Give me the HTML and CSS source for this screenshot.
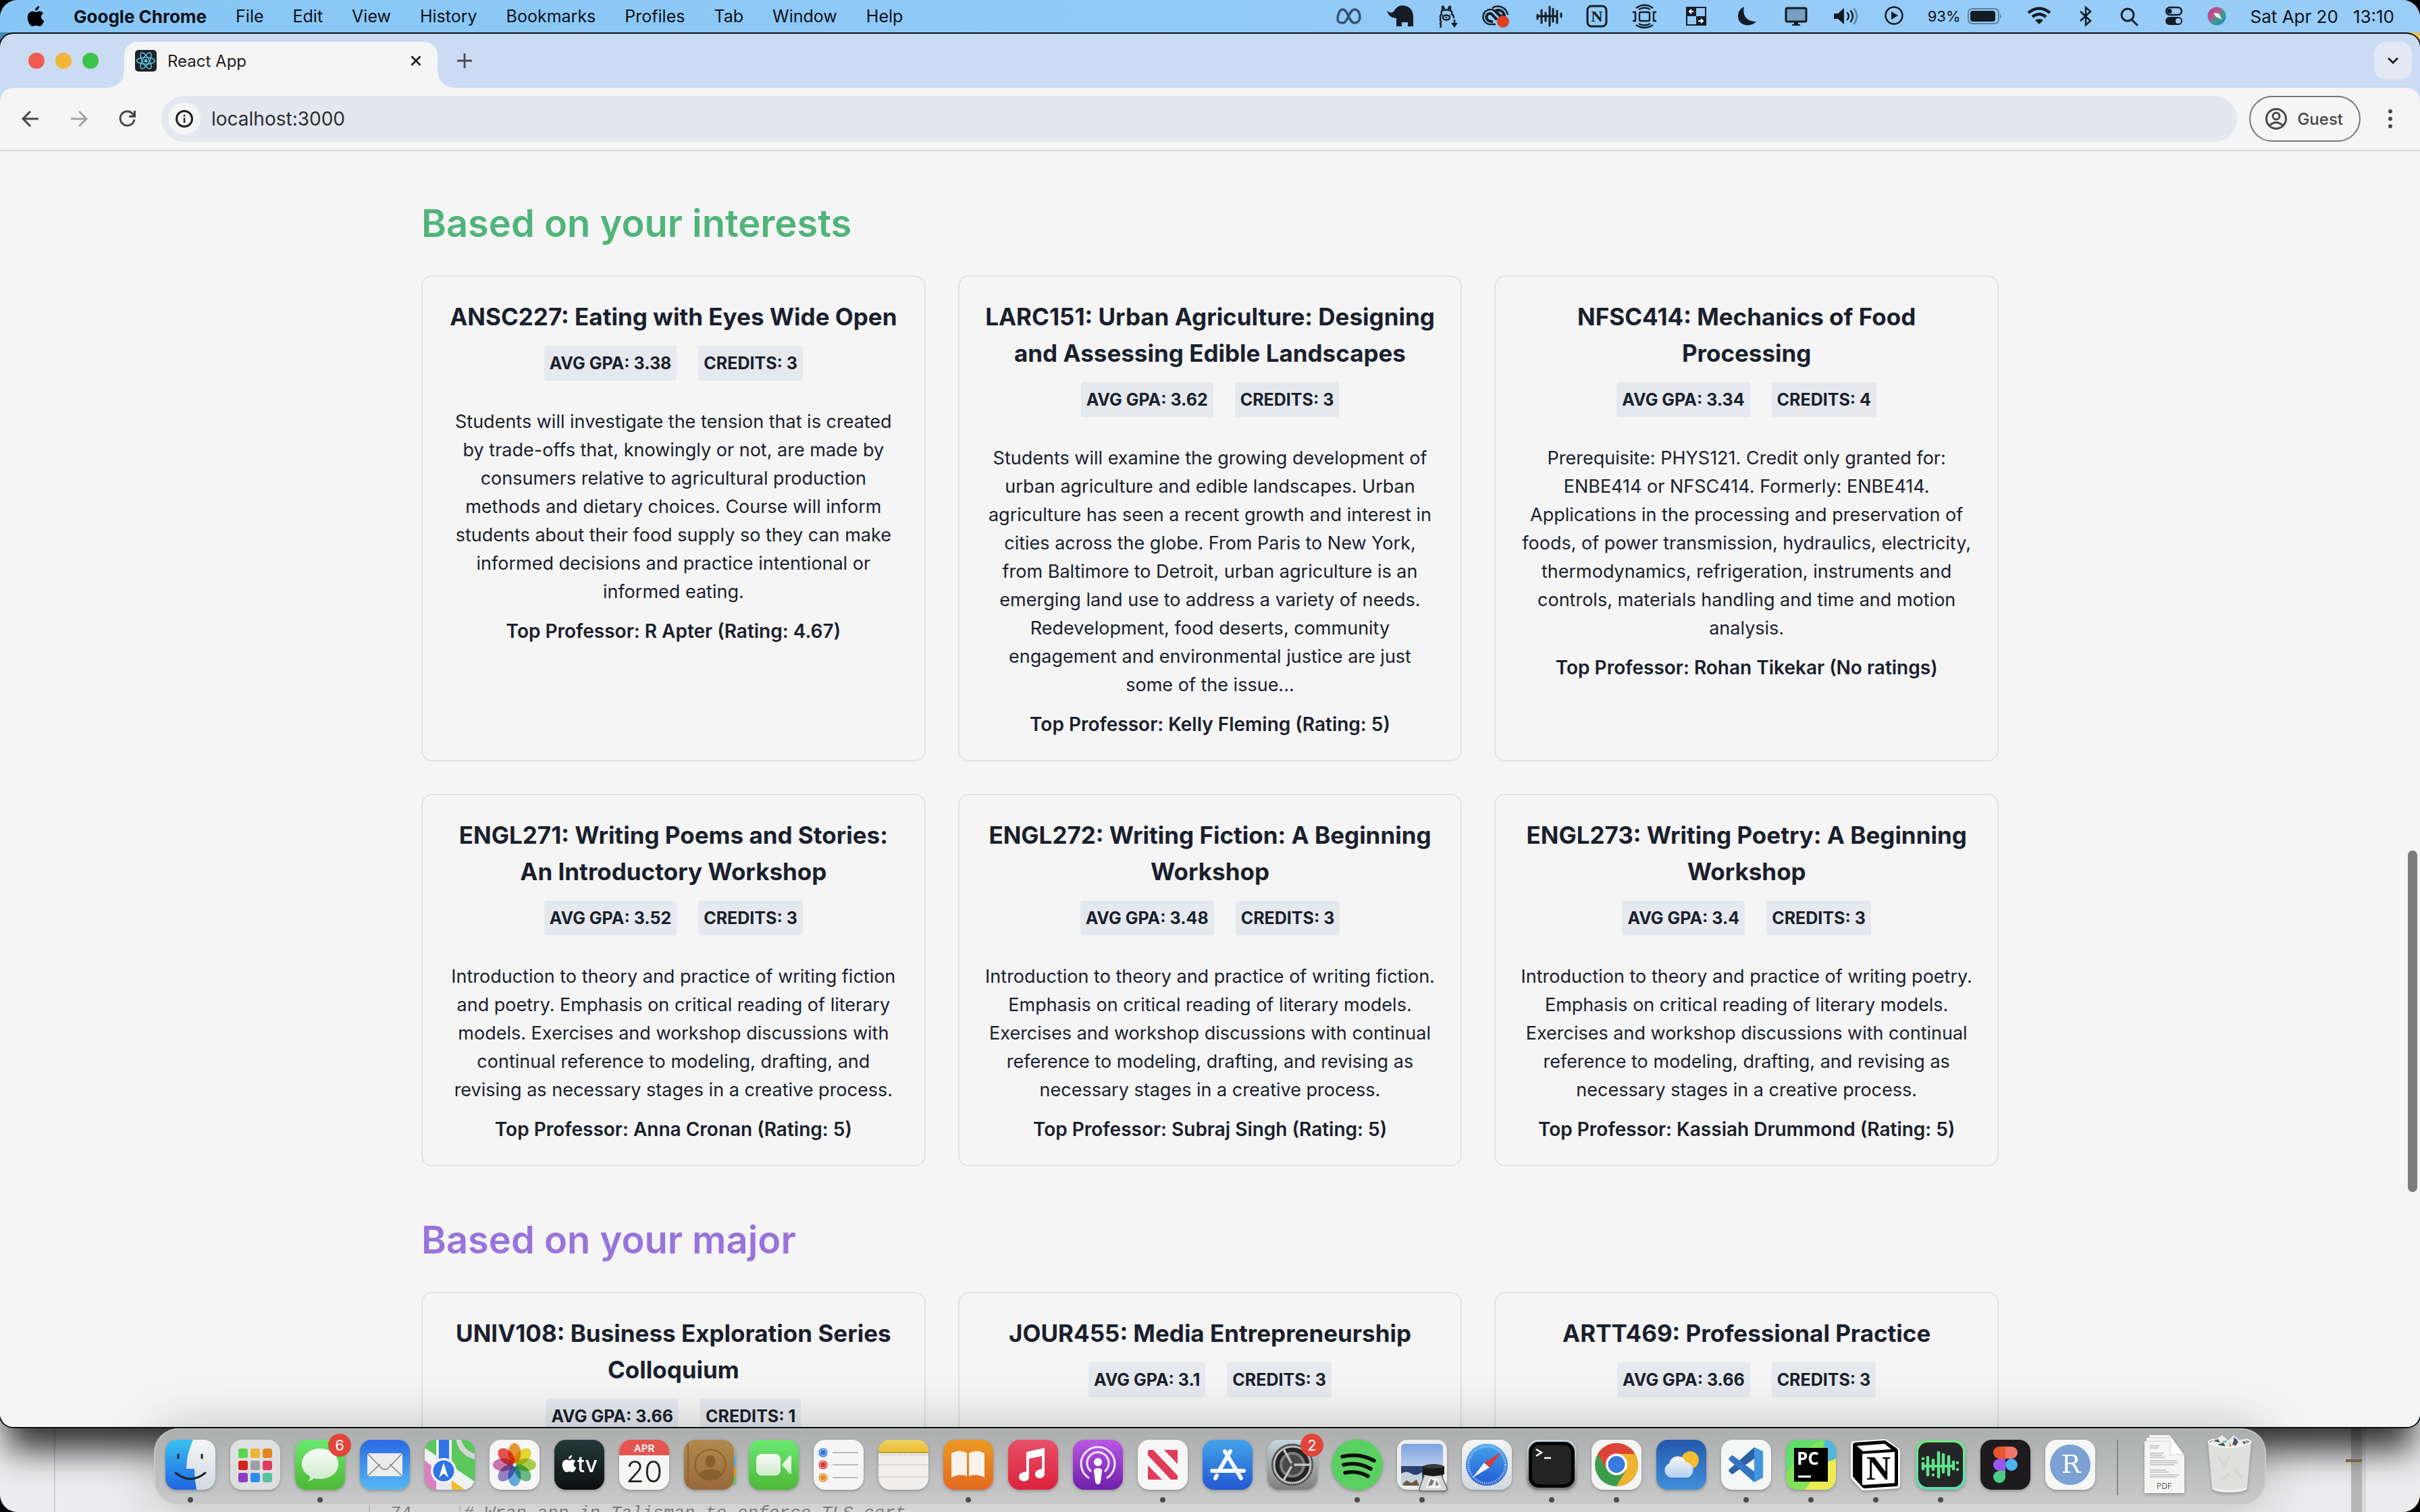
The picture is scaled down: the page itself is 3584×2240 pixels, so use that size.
FILE: index.html
```html
<!DOCTYPE html>
<html lang="en">
<head>
    <meta charset="UTF-8">
    <meta name="viewport" content="width=device-width, initial-scale=1.0">
    <title>React App</title>
    <link rel="stylesheet" href="styles.css">
</head>
<body>
<div class="desktop">

    <!-- editor window behind the browser -->
    <div class="editor">
        <div class="editor-side"></div>
        <div class="editor-files"></div>
        <div class="editor-gutter">74</div>
        <div class="editor-code"># Wrap app in Talisman to enforce TLS cert</div>
        <div class="editor-scroll"><span class="editor-mark"></span></div>
        <div class="editor-edge"></div>
    </div>

    <header class="menubar">
        <nav class="menus">
            <button class="apple" aria-label="Apple menu">
                <svg width="26" height="32" viewBox="0 0 26 32"><path d="M18 1c.3 3.5-2.7 7-6 6.800C11.600 4.500 14.700 1.300 18 1zM18.200 8.500c2.500 0 4.700 1.300 6 3.200-4.800 3-4 9.300 1.100 11.300C24 26.700 21.500 31 18.600 31c-2 0-2.600-1.200-5-1.200S10.400 31 8.500 31C4.500 31 .8 24 .8 18.200c0-6 3.600-9.400 7.400-9.400 2.200 0 3.700 1.300 5.200 1.300 1.400 0 2.700-1.600 4.800-1.600z"/></svg>
            </button>
            <button class="app-name">Google Chrome</button>
            <button>File</button>
            <button>Edit</button>
            <button>View</button>
            <button>History</button>
            <button>Bookmarks</button>
            <button>Profiles</button>
            <button>Tab</button>
            <button>Window</button>
            <button>Help</button>
        </nav>
        <div class="status">
            <svg width="39" height="48" viewBox="0 0 39 48"><path d="M2 29c0-8 3-15 8-15 7 0 9 20 17 20 5 0 8-4 8-9 0-6-3-11-8-11-8 0-10 20-17 20-5 0-8-2-8-5z" fill="none" stroke="#34516a" stroke-width="3.5"/></svg>
            <svg width="41" height="48" viewBox="0 0 41 48"><path d="M0 16q6 5 10 1 5-9 13-9 16 1 16 18v13h-8v-6h-9v6h-8V27Q3 27 0 16z"/></svg>
            <svg width="28" height="48" viewBox="0 0 28 48" fill="none" stroke="#131c24" stroke-width="2.5"><path d="M2 41q2-4 0-6 2-3 0-5 1-3 0-5 0-3 2-4-1-5 1-5V10q2-2 3 5 4-1 6 0 1-7 3-5v6q3 0 2 5 3 1 3 6"/><ellipse cx="11" cy="26" rx="5" ry="3.5"/><path d="M11 25v2M5 23h1M16 23h1M23 29v6"/><path d="M18 34h10l-5 7z" fill="#131c24" stroke="none"/></svg>
            <svg width="44" height="48" viewBox="0 0 44 48" fill="none" stroke="#131c24" stroke-width="2.5"><path d="M20 36h-7a11 11 0 1 1 4-21l11 11"/><path d="M15 12c9-6 21-1 23 10"/><path d="M16 32c-8 0-11-5-9-9s7-4 9 0l6 6M20 16c6-3 12 1 13 7l-6 1z" stroke-width="4"/><circle cx="31" cy="32" r="9" fill="#e23f1f" stroke="none"/></svg>
            <svg width="38" height="48" viewBox="0 0 38 48" stroke="#131c24" stroke-width="3" stroke-linecap="round"><path d="M2 22v6M8 15v19M14 19v12M20 10v28M25 13v19M31 16v18M37 20v5M2 24h29"/></svg>
            <svg width="32" height="48" viewBox="0 0 32 48"><rect x="2" y="9" width="28" height="30" rx="6" fill="none" stroke="#131c24" stroke-width="3"/><text x="16" y="32" text-anchor="middle" class="serif-n">N</text></svg>
            <svg width="44" height="48" viewBox="0 0 44 48" fill="none" stroke="#131c24" stroke-width="2.5"><rect x="11" y="18" width="15" height="13" rx="2"/><path d="M1 18h4v13H1M36 18h-4v13h4M10 14q8.500-5 17 0M6 12q12.500-9 25 0M10 35q8.500 5 17 0M6 37q12.500 8 25 0"/></svg>
            <svg width="40" height="48" viewBox="0 0 40 48"><rect x="1" y="11" width="28" height="26" fill="none" stroke="#131c24" stroke-width="2"/><path d="M1 11h14v13H1zM15 24h14v13H15z"/><path d="M11 17H5m3-3-3 3 3 3M18 31h7m-3-3 3 3-3 3" fill="none" stroke="#fff" stroke-width="2"/></svg>
            <svg width="34" height="48" viewBox="0 0 34 48"><path d="M10 10c-3 13 4 22 18 22C20 41 1 39 1 24 1 17 5 12 10 10z"/></svg>
            <svg width="36" height="48" viewBox="0 0 36 48"><rect x="2" y="12" width="30" height="20" rx="2" fill="#789fbf" stroke="#131c24" stroke-width="3"/><path d="M14 33h6v3h3v2H11v-2h3z"/></svg>
            <svg width="40" height="48" viewBox="0 0 40 48" fill="none" stroke="#131c24" stroke-width="2.5" stroke-linecap="round"><path d="M1 20h6l9-8v24l-9-8H1z" fill="#131c24" stroke="none"/><path d="M21 19q4 5 0 10M26 16q6 8 0 16"/><path d="M31 13q8 11 0 22" opacity=".4"/></svg>
            <svg width="28" height="48" viewBox="0 0 28 48"><circle cx="14" cy="23" r="12.5" fill="none" stroke="#131c24" stroke-width="2.5"/><path d="M10 17l10 6-10 6z"/></svg>
            <span class="battery">93%
                <svg width="52" height="48" viewBox="0 0 52 48"><rect x="1" y="13" width="45" height="22" rx="6" fill="none" stroke="#56809f" stroke-width="2"/><rect x="4" y="16" width="37" height="16" rx="4"/><path d="M48 20q4 4 0 8z" fill="#56809f"/></svg>
            </span>
            <svg width="41" height="48" viewBox="0 0 41 48" fill="none" stroke="#131c24" stroke-width="4.5"><path d="M2 19q16-13 32 0M8 25q10-8 20 0"/><path d="M12 30q6-4 12 0l-6 6z" fill="#131c24" stroke="none"/></svg>
            <svg width="25" height="48" viewBox="0 0 25 48" fill="none" stroke="#131c24" stroke-width="2.5"><path d="M2 17l15 14-7 6V11l7 6L2 31"/></svg>
            <svg width="30" height="48" viewBox="0 0 30 48" fill="none" stroke="#131c24" stroke-width="3"><circle cx="11" cy="22" r="9"/><path d="M17 29l8 8" stroke-linecap="round"/></svg>
            <svg width="27" height="48" viewBox="0 0 27 48"><rect x="2" y="11" width="23" height="11" rx="5.5" fill="none" stroke="#131c24" stroke-width="2.5"/><circle cx="7" cy="16.5" r="3.5"/><rect x="1" y="25" width="25" height="12" rx="6"/><circle cx="20" cy="31" r="4" fill="#97cbf6"/></svg>
            <svg width="28" height="48" viewBox="0 0 28 48"><circle cx="14" cy="24" r="13.5" fill="url(#siri)"/><path d="M9 19l8 1 5 9-9-4z" fill="#fff" opacity=".9"/></svg>
            <span class="clock"><span>Sat Apr 20</span><span>13:10</span></span>
        </div>
    </header>

    <div class="browser">
        <div class="tabstrip">
            <div class="lights"><span class="red"></span><span class="yellow"></span><span class="green"></span></div>
            <div class="tab">
                <svg width="32" height="32" viewBox="0 0 32 32"><rect width="32" height="32" rx="5" fill="#20232a"/><g fill="none" stroke="#61c5de" stroke-width="1.5"><ellipse cx="16" cy="16" rx="13.5" ry="5"/><ellipse cx="16" cy="16" rx="13.5" ry="5" transform="rotate(60 16 16)"/><ellipse cx="16" cy="16" rx="13.5" ry="5" transform="rotate(120 16 16)"/></g><circle cx="16" cy="16" r="2.5" fill="#61c5de"/></svg>
                <span class="tab-title">React App</span>
                <button aria-label="Close tab"><svg width="16" height="16" viewBox="0 0 16 16"><path d="M1.500 1.500l13 13M14.500 1.500l-13 13" stroke="#1f2023" stroke-width="2.8"/></svg></button>
            </div>
            <button class="new-tab" aria-label="New tab"><svg width="22" height="22" viewBox="0 0 22 22"><path d="M11 0v22M0 11h22" stroke="#474b50" stroke-width="2.8"/></svg></button>
            <button class="tab-search" aria-label="Search tabs"><svg width="18" height="12" viewBox="0 0 18 12"><path d="M2 2l7 7 7-7" fill="none" stroke="#1f2023" stroke-width="3"/></svg></button>
        </div>

        <div class="toolbar">
            <button aria-label="Back"><svg width="28" height="28" viewBox="0 0 28 28"><path d="M26 14H4M14 3L3 14l11 11" fill="none" stroke="#474747" stroke-width="3"/></svg></button>
            <button aria-label="Forward"><svg width="28" height="28" viewBox="0 0 28 28"><path d="M2 14h22M14 3l11 11-11 11" fill="none" stroke="#a3a3a3" stroke-width="3"/></svg></button>
            <button aria-label="Reload"><svg width="28" height="28" viewBox="0 0 28 28"><path d="M24 15a10.500 10.500 0 1 1-3-9l3 4" fill="none" stroke="#474747" stroke-width="3"/><path d="M26 2v10H16V9h7V2z" fill="#474747"/></svg></button>
            <label class="omnibox">
                <span class="site-info"><svg width="28" height="28" viewBox="0 0 28 28"><circle cx="14" cy="14" r="11.5" fill="none" stroke="#1f2023" stroke-width="3"/><path d="M14 12.500V20M14 8v2.500" stroke="#1f2023" stroke-width="2.5"/></svg></span>
                <input type="text" value="localhost:3000" aria-label="Address">
            </label>
            <button class="guest">
                <svg width="34" height="34" viewBox="0 0 34 34" fill="none" stroke="#474747" stroke-width="3"><circle cx="17" cy="17" r="14.5"/><circle cx="17" cy="13" r="5"/><path d="M7 27q10-9 20 0"/></svg>
                Guest
            </button>
            <button class="more" aria-label="More"><svg width="8" height="30" viewBox="0 0 8 30" fill="#474747"><circle cx="4" cy="4" r="3"/><circle cx="4" cy="15" r="3"/><circle cx="4" cy="26" r="3"/></svg></button>
        </div>

        <main class="page">
            <section class="container">
                <h2 class="interests">Based on your interests</h2>
                <div class="courses">
                    <article class="card">
                        <h3>ANSC227: Eating with Eyes Wide Open</h3>
                        <div class="badges"><span>Avg GPA: 3.38</span><span>Credits: 3</span></div>
                        <p>Students will investigate the tension that is created by trade-offs that, knowingly or not, are made by consumers relative to agricultural production methods and dietary choices. Course will inform students about their food supply so they can make informed decisions and practice intentional or informed eating.</p>
                        <strong>Top Professor: R Apter (Rating: 4.67)</strong>
                    </article>
                    <article class="card">
                        <h3>LARC151: Urban Agriculture: Designing and Assessing Edible Landscapes</h3>
                        <div class="badges"><span>Avg GPA: 3.62</span><span>Credits: 3</span></div>
                        <p>Students will examine the growing development of urban agriculture and edible landscapes. Urban agriculture has seen a recent growth and interest in cities across the globe. From Paris to New York, from Baltimore to Detroit, urban agriculture is an emerging land use to address a variety of needs. Redevelopment, food deserts, community engagement and environmental justice are just some of the issue...</p>
                        <strong>Top Professor: Kelly Fleming (Rating: 5)</strong>
                    </article>
                    <article class="card">
                        <h3>NFSC414: Mechanics of Food Processing</h3>
                        <div class="badges"><span>Avg GPA: 3.34</span><span>Credits: 4</span></div>
                        <p>Prerequisite: PHYS121. Credit only granted for: ENBE414 or NFSC414. Formerly: ENBE414. Applications in the processing and preservation of foods, of power transmission, hydraulics, electricity, thermodynamics, refrigeration, instruments and controls, materials handling and time and motion analysis.</p>
                        <strong>Top Professor: Rohan Tikekar (No ratings)</strong>
                    </article>
                    <article class="card">
                        <h3>ENGL271: Writing Poems and Stories: An Introductory Workshop</h3>
                        <div class="badges"><span>Avg GPA: 3.52</span><span>Credits: 3</span></div>
                        <p>Introduction to theory and practice of writing fiction and poetry. Emphasis on critical reading of literary models. Exercises and workshop discussions with continual reference to modeling, drafting, and revising as necessary stages in a creative process.</p>
                        <strong>Top Professor: Anna Cronan (Rating: 5)</strong>
                    </article>
                    <article class="card">
                        <h3>ENGL272: Writing Fiction: A Beginning Workshop</h3>
                        <div class="badges"><span>Avg GPA: 3.48</span><span>Credits: 3</span></div>
                        <p>Introduction to theory and practice of writing fiction. Emphasis on critical reading of literary models. Exercises and workshop discussions with continual reference to modeling, drafting, and revising as necessary stages in a creative process.</p>
                        <strong>Top Professor: Subraj Singh (Rating: 5)</strong>
                    </article>
                    <article class="card">
                        <h3>ENGL273: Writing Poetry: A Beginning Workshop</h3>
                        <div class="badges"><span>Avg GPA: 3.4</span><span>Credits: 3</span></div>
                        <p>Introduction to theory and practice of writing poetry. Emphasis on critical reading of literary models. Exercises and workshop discussions with continual reference to modeling, drafting, and revising as necessary stages in a creative process.</p>
                        <strong>Top Professor: Kassiah Drummond (Rating: 5)</strong>
                    </article>
                </div>
            </section>

            <section class="container">
                <h2 class="major">Based on your major</h2>
                <div class="courses">
                    <article class="card">
                        <h3>UNIV108: Business Exploration Series Colloquium</h3>
                        <div class="badges"><span>Avg GPA: 3.66</span><span>Credits: 1</span></div>
                    </article>
                    <article class="card">
                        <h3>JOUR455: Media Entrepreneurship</h3>
                        <div class="badges"><span>Avg GPA: 3.1</span><span>Credits: 3</span></div>
                    </article>
                    <article class="card">
                        <h3>ARTT469: Professional Practice</h3>
                        <div class="badges"><span>Avg GPA: 3.66</span><span>Credits: 3</span></div>
                    </article>
                </div>
            </section>
            <div class="scroll-thumb"></div>
        </main>
    </div>

    <ul class="dock">
        <!-- Finder -->
        <li class="running"><svg viewBox="0 0 74 74"><g clip-path="url(#tile)"><rect width="74" height="74" fill="url(#finder)"/><path d="M41 0Q31 22 31 43h12q0 16 3 31h28V0z" fill="url(#silver)"/></g><path d="M19 22v5M54 22v5M15 49q22 18 44 0" fill="none" stroke="#16242f" stroke-width="3" stroke-linecap="round"/></svg></li>
        <!-- Launchpad -->
        <li><svg viewBox="0 0 74 74"><rect width="74" height="74" rx="17" fill="#dedfe0"/><rect x="12" y="13" width="14" height="14" rx="3" fill="#5bd64b"/><rect x="30" y="13" width="14" height="14" rx="3" fill="#edb52f"/><rect x="48" y="13" width="14" height="14" rx="3" fill="#e5851f"/><rect x="12" y="31" width="14" height="14" rx="3" fill="#d0241f"/><rect x="30" y="31" width="14" height="14" rx="3" fill="#9a9fa3"/><rect x="48" y="31" width="14" height="14" rx="3" fill="#e03a5c"/><rect x="12" y="49" width="14" height="14" rx="3" fill="#8d3bc9"/><rect x="30" y="49" width="14" height="14" rx="3" fill="#2b8ded"/><rect x="48" y="49" width="14" height="14" rx="3" fill="#56c4a0"/></svg></li>
        <!-- Messages -->
        <li class="running"><svg viewBox="0 0 74 74"><rect width="74" height="74" rx="17" fill="url(#lime)"/><path d="M37 13c15 0 27 10 27 23S52 58 37 58q-5 0-9-1-3 4-9 4 4-3 3-7c-7-4-12-10-12-18 0-13 12-23 27-23z" fill="url(#bubble)"/></svg><span class="badge">6</span></li>
        <!-- Mail -->
        <li><svg viewBox="0 0 74 74"><rect width="74" height="74" rx="17" fill="url(#mail)"/><rect x="11" y="20" width="52" height="34" rx="3" fill="#ececec"/><path d="M12 53l18-17M62 53L44 36M12 21l20 21q5 4 10 0l20-21" fill="none" stroke="#858585" stroke-width="1.6"/></svg></li>
        <!-- Maps -->
        <li><svg viewBox="0 0 74 74"><g clip-path="url(#tile)"><rect width="74" height="74" fill="#5ac85a"/><path d="M0 12l74 50v12H50L0 34z" fill="#f1f1f2"/><path d="M0 30l18 16v28H0z" fill="#dd7fc0"/><path d="M40 60l20 14H40z" fill="#f0bd30"/><path d="M17 0h23v74H17z" fill="#e8e9ee"/><path d="M21 0h15v40H21z" fill="#2f73e4"/><path d="M50-4q2 24 28 30" fill="none" stroke="#d4d6d8" stroke-width="8"/></g><circle cx="28" cy="46" r="19" fill="#f2f3f5"/><circle cx="28" cy="46" r="15.5" fill="#2f73e4"/><path d="M28 34l7 22-7-6-7 6z" fill="#fff"/></svg></li>
        <!-- Photos -->
        <li><svg viewBox="0 0 74 74"><rect width="74" height="74" rx="17" fill="#f6f6f6"/><g class="petals"><ellipse cx="37" cy="20" rx="9.5" ry="15" fill="#ef8f22"/><ellipse cx="37" cy="20" rx="9.5" ry="15" fill="#e9d822" transform="rotate(45 37 37)"/><ellipse cx="37" cy="20" rx="9.5" ry="15" fill="#a6cf45" transform="rotate(90 37 37)"/><ellipse cx="37" cy="20" rx="9.5" ry="15" fill="#5cba80" transform="rotate(135 37 37)"/><ellipse cx="37" cy="20" rx="9.5" ry="15" fill="#5ba7dd" transform="rotate(180 37 37)"/><ellipse cx="37" cy="20" rx="9.5" ry="15" fill="#8b78c5" transform="rotate(225 37 37)"/><ellipse cx="37" cy="20" rx="9.5" ry="15" fill="#cb6aa8" transform="rotate(270 37 37)"/><ellipse cx="37" cy="20" rx="9.5" ry="15" fill="#e8453c" transform="rotate(315 37 37)"/></g></svg></li>
        <!-- TV -->
        <li><svg viewBox="0 0 74 74"><rect width="74" height="74" rx="17" fill="url(#tv)"/><path transform="translate(11 22) scale(.84)" fill="#fff" d="M18 1c.3 3.5-2.7 7-6 6.800C11.600 4.500 14.700 1.300 18 1zM18.200 8.500c2.500 0 4.700 1.300 6 3.200-4.800 3-4 9.300 1.100 11.300C24 26.700 21.500 31 18.600 31c-2 0-2.600-1.200-5-1.200S10.400 31 8.500 31C4.500 31 .8 24 .8 18.200c0-6 3.600-9.400 7.400-9.400 2.200 0 3.700 1.300 5.200 1.300 1.400 0 2.700-1.600 4.800-1.600z"/><text x="34" y="48" class="tv-text">tv</text></svg></li>
        <!-- Calendar -->
        <li><svg viewBox="0 0 74 74"><g clip-path="url(#tile)"><rect width="74" height="74" fill="#f6f5f4"/><rect width="74" height="23" fill="#e5554f"/></g><text x="37" y="18" text-anchor="middle" class="cal-month">APR</text><text x="37" y="63" text-anchor="middle" class="cal-day">20</text></svg></li>
        <!-- Contacts -->
        <li><svg viewBox="0 0 74 74"><rect x="60" y="12" width="17" height="15" rx="3" fill="#aaa99a"/><rect x="60" y="25" width="17" height="15" rx="3" fill="#4fb0dd"/><rect x="60" y="40" width="17" height="14" rx="3" fill="#e88f2a"/><rect x="60" y="52" width="17" height="14" rx="3" fill="#5fc653"/><rect width="74" height="74" rx="17" fill="url(#leather)"/><path d="M6 6v62" stroke="#8a5f2c" stroke-width="1.5"/><circle cx="39" cy="37" r="22.5" fill="none" stroke="#86602f" stroke-width="2"/><ellipse cx="39" cy="32" rx="7.5" ry="9" fill="#86602f"/><path d="M22 51q4-7 17-7t17 7q-7 8-17 8t-17-8z" fill="#86602f"/></svg></li>
        <!-- FaceTime -->
        <li><svg viewBox="0 0 74 74"><rect width="74" height="74" rx="17" fill="url(#lime)"/><rect x="11" y="21" width="36" height="32" rx="8" fill="url(#bubble)"/><path d="M49 37l11-13q3-2 3 2v22q0 4-3 2z" fill="url(#bubble)"/></svg></li>
        <!-- Reminders -->
        <li><svg viewBox="0 0 74 74"><rect width="74" height="74" rx="17" fill="#f5f5f5"/><g stroke-width="1.6" fill="none"><circle cx="14" cy="19" r="5.8" stroke="#2f73dc"/><circle cx="14" cy="37" r="5.8" stroke="#d8332f"/><circle cx="14" cy="56" r="5.8" stroke="#e08a28"/></g><circle cx="14" cy="19" r="4" fill="#2f73dc"/><circle cx="14" cy="37" r="4" fill="#d8332f"/><circle cx="14" cy="56" r="4" fill="#e08a28"/><path d="M28 19h38M28 37h38M28 56h38" stroke="#a9a9a9" stroke-width="1.5"/></svg></li>
        <!-- Notes -->
        <li><svg viewBox="0 0 74 74"><g clip-path="url(#tile)"><rect width="74" height="74" fill="#f0efed"/><rect width="74" height="19" fill="url(#gold)"/><path d="M0 19h74" stroke="#a98d35" stroke-width="1.5"/><path d="M3 22.500h71" stroke="#bba8a0" stroke-width="1.5" stroke-dasharray="1.5 2"/><path d="M0 37h74M0 55h74" stroke="#cfcecb" stroke-width="1.5"/></g></svg></li>
        <!-- Books -->
        <li class="running"><svg viewBox="0 0 74 74"><rect width="74" height="74" rx="17" fill="url(#orange)"/><path d="M12 20q12-7 23 0v34q-11-5-23 2zM38 20q12-7 23 0v36q-12-7-23-2z" fill="#f9f2ea"/></svg></li>
        <!-- Music -->
        <li><svg viewBox="0 0 74 74"><rect width="74" height="74" rx="17" fill="url(#music)"/><path d="M27 18l27-6v38c0 9-14 9-14 1 0-6 6-7 10-8V24l-19 4v27c0 9-15 8-15 0 0-6 6-7 11-8z" fill="#fff"/></svg></li>
        <!-- Podcasts -->
        <li><svg viewBox="0 0 74 74"><rect width="74" height="74" rx="17" fill="url(#purple)"/><path d="M24 57a25 25 0 1 1 26 0M27 47a16 16 0 1 1 20 0" fill="none" stroke="#f3e6fb" stroke-width="3"/><circle cx="37" cy="33" r="6" fill="#fff"/><path d="M31 46q0-4 6-4t6 4l-2 16q-1 4-4 4t-4-4z" fill="#fff"/></svg></li>
        <!-- News -->
        <li class="running"><svg viewBox="0 0 74 74"><rect width="74" height="74" rx="17" fill="#f7f6f6"/><path d="M17 15h6l36 38v6H49L15 23v-6q0-2 2-2zM39 15h20v21zM15 38l21 21H17q-2 0-2-2z" fill="#e23b5a"/></svg></li>
        <!-- App Store -->
        <li><svg viewBox="0 0 74 74"><rect width="74" height="74" rx="17" fill="url(#store)"/><path d="M41 17L25 45M33 17l24 40M14 46h47M21 53l-2 4" stroke="#f5f9fd" stroke-width="6" stroke-linecap="round"/></svg></li>
        <!-- Settings -->
        <li><svg viewBox="0 0 74 74"><rect width="74" height="74" rx="17" fill="url(#steel)"/><circle cx="37" cy="37" r="31" fill="#252525"/><circle cx="37" cy="37" r="27" fill="none" stroke="#bdbdbd" stroke-width="3"/><circle cx="37" cy="37" r="30" fill="none" stroke="#858585" stroke-width="3" stroke-dasharray="1.5 1.6"/><circle cx="37" cy="37" r="17" fill="#484848" stroke="#7d7d7d" stroke-width="4"/><path d="M37 37h26M37 37L24 14M37 37L24 60" stroke="#c4c4c4" stroke-width="3.5"/><circle cx="37" cy="37" r="3" fill="#555"/></svg><span class="badge">2</span></li>
        <!-- Spotify -->
        <li class="running"><svg viewBox="0 0 74 74"><circle cx="37" cy="37" r="38" fill="#5bd062"/><path d="M15 25q25-6 47 6M17 37q21-5 40 6M19 49q18-4 34 5" fill="none" stroke="#0d120d" stroke-linecap="round" stroke-width="5.5"/></svg></li>
        <!-- Preview -->
        <li class="running"><svg viewBox="0 0 74 74"><rect width="74" height="74" rx="15" fill="#eeeeef"/><path d="M6 12q0-6 6-6h50q6 0 6 6v28H6z" fill="url(#sky)"/><path d="M6 39h62v29H12q-6 0-6-6z" fill="#2b416e"/><path d="M6 50q8-5 15 0t16-2v20H12q-6 0-6-6z" fill="#c6d1dc"/><path d="M8 66l6-6 7 4 8-5 4 9H10z" fill="#6d5a42"/><path d="M42 48h22l10 24q1 4-4 4H37q-5 0-4-4z" fill="#d5d6d7" stroke="#66686a" stroke-width="1.5"/><path d="M48 56h12l6 16H42z" fill="#f1f1f1"/><path d="M50 58l5 3-3 6-6 2zM58 60l4 7-5 1z" fill="#777"/><path d="M38 39q16-6 32 0v12q-16 6-32 0z" fill="#19191a"/><ellipse cx="54" cy="39.5" rx="15" ry="3" fill="#3b3b3c"/></svg></li>
        <!-- Safari -->
        <li><svg viewBox="0 0 74 74"><rect width="74" height="74" rx="17" fill="url(#silver)"/><circle cx="37" cy="37" r="31" fill="url(#store)"/><circle cx="37" cy="37" r="27.5" fill="none" stroke="#bcdcf5" stroke-width="4" stroke-dasharray="1 1.9"/><path d="M59 18L41 41l-8-7z" fill="#dc3a36"/><path d="M16 56l17-22 8 7z" fill="#f2f2f2"/></svg></li>
        <!-- Terminal -->
        <li class="running"><svg viewBox="0 0 74 74"><rect width="74" height="74" rx="17" fill="url(#steel)"/><rect x="3" y="3" width="68" height="68" rx="15" fill="#000"/><rect x="8" y="8" width="58" height="58" rx="10" fill="#232323"/><path d="M14 14l8 5-8 5M26 27h10" fill="none" stroke="#fff" stroke-width="2.5"/></svg></li>
        <!-- Chrome -->
        <li class="running"><svg viewBox="0 0 74 74"><rect width="74" height="74" rx="17" fill="#f4f4f4"/><circle cx="37" cy="37" r="32" fill="#3d9c4b"/><path d="M37 37L9.300 21A32 32 0 0 1 64.700 21H37z" fill="#dd4437"/><path d="M37 21h27.700A32 32 0 0 1 37 69l14-24z" fill="#eeb42f"/><path d="M9.300 21l14 24L37 21z" fill="#dd4437"/><circle cx="37" cy="36.5" r="16" fill="#fff"/><circle cx="37" cy="36.5" r="12.5" fill="#3a7be0"/></svg></li>
        <!-- Weather -->
        <li><svg viewBox="0 0 74 74"><rect width="74" height="74" rx="17" fill="url(#weather)"/><circle cx="50" cy="30" r="13" fill="#f0bd33"/><path d="M22 56a11 11 0 0 1-3-21 13 13 0 0 1 25-2 12 12 0 0 1 3 23z" fill="url(#cloud)"/></svg></li>
        <!-- VS Code -->
        <li class="running"><svg viewBox="0 0 74 74"><rect width="74" height="74" rx="17" fill="#f5f6f6"/><path d="M49 11v17L17 51q-2 0-6-5 0-2 2-3z" fill="#2a62a3"/><path d="M49 63V47L17 23q-2 0-6 5 0 2 2 3z" fill="#3474c4"/><path d="M49 11l13 6v39l-13 7z" fill="#4296e0"/></svg></li>
        <!-- PyCharm -->
        <li class="running"><svg viewBox="0 0 74 74"><g clip-path="url(#tile)"><rect width="74" height="74" fill="#62dc6b"/><path d="M0 50L20 20 54 0l4 30L30 74H0z" fill="#83e25a"/><path d="M57 0h17v30l-17 6z" fill="#4fb6dc"/><path d="M74 28v46H28l30-40z" fill="#eeea52"/></g><rect x="12" y="12" width="50" height="50" fill="#000"/><text x="16" y="37" class="pc-text">PC</text><path d="M18 54.500h19" stroke="#fff" stroke-width="3"/></svg></li>
        <!-- Notion -->
        <li class="running"><svg viewBox="0 0 74 74"><path d="M4 2L50-1q3 0 5 2l15 11q3 2 3 5v50q0 5-5 5l-48 3q-4 0-6-3L2 59q-2-2-2-5V7q0-4 4-5z" fill="#fff"/><path d="M6 4l44-3q2 0 4 2l13 9q3 2 3 4v50q0 3-3 3l-47 3q-2 0-4-3L5 57q-2-2-2-4V8q0-3 3-4z" fill="#000"/><path d="M9 9l41-3 10 8-42 3z" fill="#fff"/><path d="M17 21l48-3v46l-48 3z" fill="#fff"/><text x="41" y="59" text-anchor="middle" class="notion-n">N</text></svg></li>
        <!-- Audio -->
        <li class="running"><svg viewBox="0 0 74 74"><rect width="74" height="74" rx="17" fill="url(#mint)"/><rect x="4" y="4" width="66" height="66" rx="14" fill="#242526"/><path d="M11 35v8M18 26v26M26 30v14M34 19v36M41 22v26M49 25v27M56 33v10" stroke="#5fe38a" stroke-width="4.5" stroke-linecap="round"/><path d="M11 39h45" stroke="#5fe38a" stroke-width="4"/><g fill="#5fe38a"><circle cx="11" cy="28" r="2.2"/><circle cx="26" cy="52" r="2.2"/><circle cx="62" cy="34" r="2.2"/><circle cx="62" cy="44" r="2.2"/></g></svg></li>
        <!-- Figma -->
        <li><svg viewBox="0 0 74 74"><rect width="74" height="74" rx="17" fill="#1d1b1e"/><path d="M37 10H28a9 9 0 0 0 0 18h9z" fill="#e8562f"/><path d="M37 10h9a9 9 0 0 1 0 18h-9z" fill="#ee756a"/><path d="M37 28H28a9 9 0 0 0 0 18h9z" fill="#9b57f0"/><circle cx="46" cy="37" r="9" fill="#4eb2ef"/><path d="M37 46H28a9 9 0 1 0 9 9z" fill="#4fc986"/></svg></li>
        <!-- RStudio -->
        <li><svg viewBox="0 0 74 74"><rect width="74" height="74" rx="17" fill="#f6f6f6"/><circle cx="37" cy="37" r="30" fill="#7ba2d2"/><text x="38" y="49" text-anchor="middle" class="r-text">R</text></svg></li>
        <li class="divider"></li>
        <!-- PDF on the stack -->
        <li class="tall"><svg viewBox="0 0 62 88"><path d="M8 0h30l22 30v56H1V9h3V4h4z" fill="#f5f5f4"/><path d="M4 4h32M1 9h36" stroke="#cfcfcf"/><path d="M9 16h14M9 19h12M9 27h20M9 30h18M9 33h22M9 38h40M9 41h42M9 44h36M9 52h24M9 55h28M9 59h44M9 62h40" stroke="#bdb8ba" stroke-width="1.5"/><path d="M37 0q4 14 2 30 12-3 21 0L38 0z" fill="#fff" stroke="#cfcfcf"/><text x="30" y="80" text-anchor="middle" class="pdf-text">PDF</text></svg></li>
        <!-- Trash -->
        <li class="tall"><svg viewBox="0 0 66 88"><path d="M5 10l8-4 9-6 9 8 8-8 8 7 10-1 1 12H8z" fill="#e9e9e9"/><path d="M9 9l7-3 3 5zM16 14l8-3 3 6-9 1zM40 6l6 4-4 6-5-2zM52 9l5 1-2 5z" fill="#4d5156"/><path d="M22 9l7-1-1 4z" fill="#4cc0ae"/><path d="M39 3l6 5-5 1z" fill="#3a3f9c"/><path d="M33 11l3 5-4 2z" fill="#d98a3a"/><path d="M1 11q32 14 64 0l-6 67q-1 7-26 7T7 78z" fill="#dfdfde"/><path d="M1 11q2-4 10-5M65 11q-1-4-9-5M1 11q32 14 64 0M8 79q25 9 50 0" fill="none" stroke="#f7f7f7" stroke-width="2"/><path d="M16 32l10 14 6-14M40 50l10 12M20 66l12-8" fill="none" stroke="#d7d7d6" stroke-width="4" stroke-linecap="round"/></svg></li>
    </ul>
</div>

<!-- shared gradients for the icons -->
<svg class="defs" width="0" height="0" aria-hidden="true">
    <defs>
        <clipPath id="tile"><rect width="74" height="74" rx="17"/></clipPath>
        <linearGradient id="finder" x2="0" y2="1"><stop stop-color="#37c1f1"/><stop offset="1" stop-color="#2065e2"/></linearGradient>
        <linearGradient id="silver" x2="0" y2="1"><stop stop-color="#f4f4f5"/><stop offset="1" stop-color="#d3d9e0"/></linearGradient>
        <linearGradient id="lime" x2="0" y2="1"><stop stop-color="#6be873"/><stop offset="1" stop-color="#4cb835"/></linearGradient>
        <linearGradient id="bubble" x2="0" y2="1"><stop stop-color="#f7faf6"/><stop offset="1" stop-color="#cfeccb"/></linearGradient>
        <linearGradient id="mail" x2="0" y2="1"><stop stop-color="#2a69e3"/><stop offset="1" stop-color="#55b9f2"/></linearGradient>
        <linearGradient id="tv" x2="0" y2="1"><stop stop-color="#243a38"/><stop offset="1" stop-color="#0c0f10"/></linearGradient>
        <linearGradient id="leather" x2="0" y2="1"><stop stop-color="#b18a4f"/><stop offset="1" stop-color="#99693a"/></linearGradient>
        <linearGradient id="gold" x2="0" y2="1"><stop stop-color="#f0d163"/><stop offset="1" stop-color="#e9be2c"/></linearGradient>
        <linearGradient id="orange" x2="0" y2="1"><stop stop-color="#ea9a24"/><stop offset="1" stop-color="#e2691f"/></linearGradient>
        <linearGradient id="music" x2="0" y2="1"><stop stop-color="#e75069"/><stop offset="1" stop-color="#dd223c"/></linearGradient>
        <linearGradient id="purple" x2="0" y2="1"><stop stop-color="#ba57e6"/><stop offset="1" stop-color="#6e1faa"/></linearGradient>
        <linearGradient id="store" x2="0" y2="1"><stop stop-color="#43a4ea"/><stop offset="1" stop-color="#2258d3"/></linearGradient>
        <linearGradient id="steel" x2="0" y2="1"><stop stop-color="#c6d6dc"/><stop offset="1" stop-color="#807d7c"/></linearGradient>
        <linearGradient id="sky" x2="0" y2="1"><stop stop-color="#7ea3e0"/><stop offset="1" stop-color="#b6cbe9"/></linearGradient>
        <linearGradient id="weather" x2="0" y2="1"><stop stop-color="#2458ac"/><stop offset="1" stop-color="#408fdb"/></linearGradient>
        <linearGradient id="cloud" x2="0" y2="1"><stop stop-color="#f8f7f2"/><stop offset="1" stop-color="#b3d0f5"/></linearGradient>
        <linearGradient id="mint" x2="0" y2="1"><stop stop-color="#77e27c"/><stop offset="1" stop-color="#62dcb6"/></linearGradient>
        <linearGradient id="siri" x2="1" y2="1"><stop stop-color="#c12f64"/><stop offset=".4" stop-color="#b15b98"/><stop offset=".6" stop-color="#37a089"/><stop offset="1" stop-color="#2b6fd0"/></linearGradient>
    </defs>
</svg>
</body>
</html>
```

FILE: styles.css
```css
* {
    margin: 0;
    padding: 0;
    box-sizing: border-box;
}

body {
    font-family: Inter, 'Liberation Sans', sans-serif;
    color: #1a202c;
    background: #000;
}

button {
    display: flex;
    align-items: center;
    background: none;
    border: none;
    color: inherit;
    font: inherit;
    cursor: pointer;
}

svg {
    display: block;
    flex-shrink: 0;
    overflow: visible;
}

.defs {
    position: absolute;
}

.desktop {
    position: relative;
    display: flex;
    flex-direction: column;
    height: 100vh;
    overflow: hidden;
    border-radius: 26px;
    background: linear-gradient(90deg, #4784ad 50%, #e6c65c 50%);
}

/* menu bar */
.menubar {
    display: flex;
    justify-content: space-between;
    align-items: center;
    height: 48px;
    flex-shrink: 0;
    padding: 0 38px 0 40px;
    background: linear-gradient(90deg, #87c6f6, #99cdf8);
    font-size: 25px;
    color: #0c1116;
}

.menus {
    display: flex;
    align-items: center;
    gap: 43px;
    height: 44px;
}

.menus .app-name {
    font-size: 26px;
    font-weight: 700;
}

.status {
    display: flex;
    align-items: center;
    gap: 36px;
    height: 48px;
    fill: #131c24;
}

.battery {
    display: flex;
    align-items: center;
    gap: 10px;
    font-size: 22px;
}

.clock {
    display: flex;
    gap: 22px;
    font-size: 26px;
}

.serif-n {
    font: bold 24px 'Liberation Serif', serif;
}

/* browser window */
.browser {
    position: relative;
    display: flex;
    flex-direction: column;
    flex: 1;
    min-height: 0;
    margin: 2px 0 126px;
    border-radius: 20px;
    background: #ccdbf4;
    box-shadow: 0 0 0 2px #0b0f12, 0 44px 50px -10px rgba(0, 0, 0, 0.8);
}

.tabstrip {
    display: flex;
    align-items: flex-end;
    height: 80px;
    flex-shrink: 0;
    padding: 0 12px 0 42px;
}

.lights {
    display: flex;
    align-items: center;
    gap: 16px;
    height: 80px;
    margin-right: 38px;
}

.lights span {
    width: 24px;
    height: 24px;
    border-radius: 50%;
}

.lights .red {
    background: #f05c54;
}

.lights .yellow {
    background: #f2b53a;
}

.lights .green {
    background: #3dc24b;
}

.tab {
    position: relative;
    display: flex;
    align-items: center;
    gap: 16px;
    width: 464px;
    height: 68px;
    padding: 0 24px 12px 16px;
    border-radius: 20px 20px 0 0;
    background: #f5f5f5;
    font-size: 24px;
}

/* curved feet of the active tab */
.tab::before,
.tab::after {
    content: '';
    position: absolute;
    bottom: 0;
    width: 24px;
    height: 24px;
}

.tab::before {
    right: 100%;
    background: radial-gradient(circle at 0 0, transparent 23px, #f5f5f5 24px);
}

.tab::after {
    left: 100%;
    background: radial-gradient(circle at 100% 0, transparent 23px, #f5f5f5 24px);
}

.tab-title {
    flex: 1;
    color: #1f2023;
}

.new-tab {
    height: 80px;
    margin-left: 29px;
}

.tab-search {
    justify-content: center;
    width: 56px;
    height: 56px;
    margin: 0 0 12px auto;
    border-radius: 18px;
    background: #e2e9f5;
}

.toolbar {
    display: flex;
    align-items: center;
    gap: 44px;
    height: 94px;
    flex-shrink: 0;
    padding: 0 40px 0 31px;
    border-bottom: 2px solid #d8d8d8;
    border-radius: 20px 20px 0 0;
    background: #f5f5f5;
}

.omnibox {
    display: flex;
    align-items: center;
    gap: 16px;
    flex: 1;
    height: 68px;
    margin-left: -8px;
    padding: 0 10px;
    border-radius: 34px;
    background: #e4e7ef;
}

.site-info {
    display: flex;
    align-items: center;
    justify-content: center;
    width: 48px;
    height: 48px;
    border-radius: 50%;
    background: #f5f5f5;
}

.omnibox input {
    flex: 1;
    border: none;
    outline: none;
    background: none;
    color: #2c2d30;
    font: 28px Inter, 'Liberation Sans', sans-serif;
}

.guest {
    gap: 14px;
    height: 68px;
    margin-left: -26px;
    padding: 0 24px 0 21px;
    border: 2px solid #747775;
    border-radius: 34px;
    color: #474747;
    font-size: 24px;
    font-weight: 500;
}

.more {
    margin-left: -4px;
}

/* page */
.page {
    position: relative;
    flex: 1;
    min-height: 0;
    overflow: hidden;
    padding: 62px 40px 0;
    border-radius: 0 0 20px 20px;
    background: #f5f5f5;
}

.container {
    max-width: 2336px;
    margin: 0 auto 64px;
}

.container h2 {
    margin-bottom: 32px;
    font-size: 56px;
    font-weight: 600;
    line-height: 90px;
}

.interests {
    color: #51b47a;
}

.major {
    color: #9873db;
}

.courses {
    display: grid;
    grid-template-columns: repeat(3, 1fr);
    gap: 48px;
}

.card {
    display: flex;
    flex-direction: column;
    align-items: center;
    padding: 32px 36px;
    border: 2px solid #dce2e9;
    border-radius: 16px;
    text-align: center;
    font-size: 28px;
    line-height: 42px;
}

.card h3 {
    margin-bottom: 16px;
    font-size: 35px;
    font-weight: 700;
    line-height: 54px;
}

.card p {
    margin-bottom: 16px;
    font-size: 27px;
}

.card strong {
    font-weight: 600;
}

.badges {
    display: flex;
    gap: 32px;
    margin-bottom: 40px;
}

.badges span {
    padding: 8px;
    border-radius: 4px;
    background: #e5e9ee;
    font-size: 25px;
    font-weight: 700;
    line-height: 36px;
    text-transform: uppercase;
}

.scroll-thumb {
    position: absolute;
    top: 1036px;
    right: 4px;
    width: 14px;
    height: 506px;
    border-radius: 7px;
    background: #7c7c7c;
}

/* editor behind everything */
.editor {
    position: absolute;
    left: 0;
    right: 0;
    bottom: 0;
    display: flex;
    height: 160px;
    background: #ececee;
    color: #8b8b8b;
    font: italic 26px 'Liberation Mono', monospace;
    line-height: 36px;
}

.editor div {
    padding-top: 144px;
    border-right: 2px solid #cfd0d3;
    white-space: nowrap;
}

.editor .editor-side {
    width: 82px;
}

.editor .editor-files {
    width: 466px;
}

.editor .editor-gutter {
    width: 134px;
    padding-right: 70px;
    text-align: right;
    font-style: normal;
}

.editor .editor-code {
    flex: 1;
    padding-left: 4px;
    border: none;
}

.editor .editor-scroll {
    width: 16px;
    padding-top: 82px;
    border: none;
    background: #b7b7b7;
}

.editor-mark {
    display: block;
    width: 28px;
    height: 4px;
    margin-left: -8px;
    background: #8d8053;
}

.editor .editor-edge {
    width: 86px;
    border: none;
    border-left: 6px solid #dadada;
}

/* dock */
.dock {
    position: absolute;
    left: 50%;
    bottom: 10px;
    transform: translateX(-50%);
    display: flex;
    height: 114px;
    padding: 0 6px;
    border-radius: 36px;
    background: linear-gradient(#acaeae, #c9c9ca);
    box-shadow: inset 0 0 0 2px rgba(255, 255, 255, 0.2), 0 0 80px rgba(0, 0, 0, 0.22);
    list-style: none;
}

.dock li {
    position: relative;
    display: flex;
    flex-direction: column;
    align-items: center;
    width: 96px;
    padding-top: 17px;
}

.dock svg {
    height: 74px;
    filter: drop-shadow(0 2px 2px rgba(0, 0, 0, 0.25));
}

.dock .running::after {
    content: '';
    width: 8px;
    height: 8px;
    margin-top: 11px;
    border-radius: 50%;
    background: #4c4c4d;
}

.dock .badge {
    position: absolute;
    top: 8px;
    right: 2px;
    width: 34px;
    height: 34px;
    border-radius: 50%;
    background: #e2443a;
    color: #fff;
    font-size: 22px;
    line-height: 34px;
    text-align: center;
}

.dock .divider {
    width: 2px;
    height: 82px;
    margin: 17px 21px 0;
    background: #858687;
}

.dock .tall {
    padding-top: 10px;
}

.dock .tall svg {
    height: 88px;
}

.petals ellipse {
    mix-blend-mode: multiply;
    opacity: 0.9;
}

.tv-text {
    font: 500 32px Inter, sans-serif;
    fill: #fff;
}

.cal-month {
    font: 600 15px Inter, sans-serif;
    fill: #fff;
}

.cal-day {
    font: 300 44px Inter, sans-serif;
    fill: #222;
}

.pc-text {
    font: bold 26px 'Open Sans', sans-serif;
    fill: #fff;
}

.notion-n {
    font: bold 50px 'Liberation Serif', serif;
}

.r-text {
    font: 38px 'DejaVu Serif', serif;
    fill: #fff;
}

.pdf-text {
    font: 12px 'Open Sans', sans-serif;
    fill: #555;
}
```
